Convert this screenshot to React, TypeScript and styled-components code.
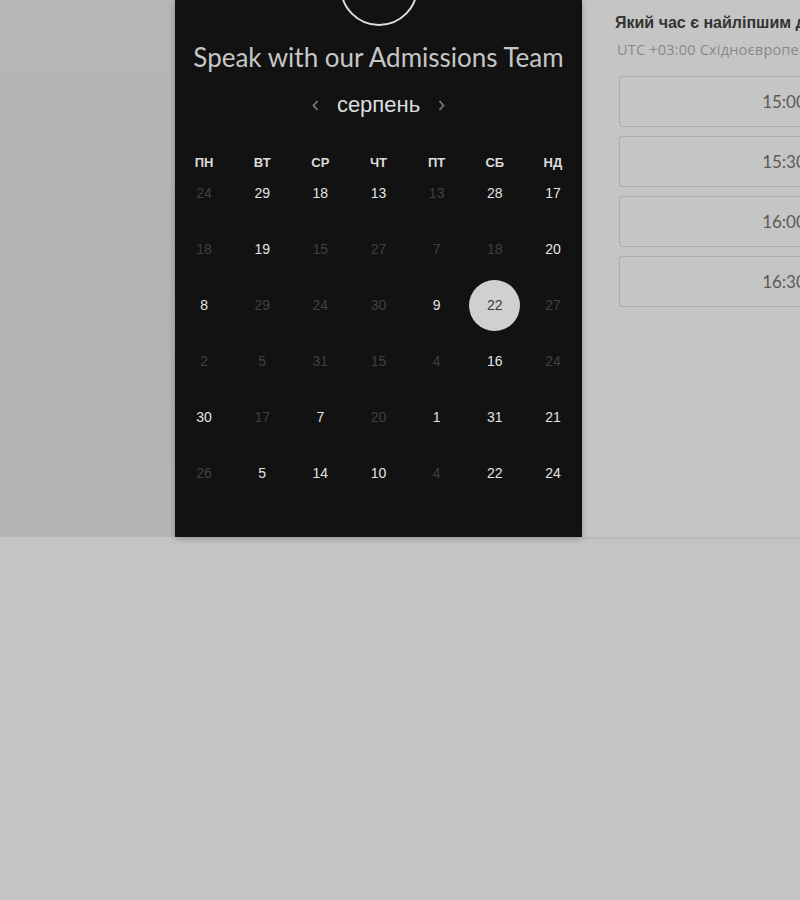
import React from "react";
import styled, { createGlobalStyle } from "styled-components";

const Global = createGlobalStyle`
  html, body { margin: 0; padding: 0; background: #c4c4c4; overflow: hidden; }
  body { font-family: "Liberation Sans", Arial, sans-serif; }
`;

const Page = styled.div`
  width: 800px;
  height: 900px;
  overflow: hidden;
  background: #c4c4c4;
`;

const TopRow = styled.div`
  display: flex;
  height: 537px;
  width: 1100px;
`;

const LeftShade = styled.div`
  width: 175px;
  flex: 0 0 175px;
  background: linear-gradient(180deg, #b6b6b6 0%, #b3b3b3 60%, #b5b5b5 100%);
`;

const CalendarPanel = styled.div`
  width: 407px;
  flex: 0 0 407px;
  background: #121212;
  box-shadow: 0 2px 6px rgba(0, 0, 0, 0.25);
  position: relative;
  z-index: 1;
  display: flex;
  flex-direction: column;
  align-items: center;
  overflow: hidden;
  padding-bottom: 42px;
  box-sizing: border-box;
`;

const Avatar = styled.div`
  width: 78px;
  height: 78px;
  flex: 0 0 78px;
  box-sizing: border-box;
  border-radius: 50%;
  border: 2.5px solid #dcdcdc;
  margin-top: -52px;
`;

const Title = styled.h1`
  margin: 15px 0 0;
  font-family: Lato, "Open Sans", sans-serif;
  font-weight: 400;
  font-size: 26px;
  line-height: 32px;
  color: #c6c6c6;
  white-space: nowrap;
`;

const MonthNav = styled.div`
  margin-top: 17px;
  height: 30px;
  display: flex;
  align-items: center;
  gap: 18px;
`;

const Month = styled.span`
  font-family: "Liberation Sans", Arial, sans-serif;
  font-size: 22px;
  line-height: 30px;
  color: #dedede;
`;

const Chevron = styled.svg`
  width: 7px;
  height: 11px;
  display: block;
`;

const WeekHeader = styled.div`
  margin-top: 35px;
  width: 100%;
  display: grid;
  grid-template-columns: repeat(7, 1fr);
`;

const WeekDay = styled.div`
  text-align: center;
  font-family: "Liberation Sans", Arial, sans-serif;
  font-weight: 700;
  font-size: 13px;
  line-height: 16px;
  color: #dcdcdc;
`;

const DaysGrid = styled.div`
  width: 100%;
  display: grid;
  grid-template-columns: repeat(7, 1fr);
  grid-auto-rows: 44px;
  row-gap: 12px;
`;

const DayCell = styled.div`
  display: flex;
  align-items: center;
  justify-content: center;
`;

const Day = styled.span<{ $muted?: boolean; $selected?: boolean }>`
  font-family: "Liberation Sans", Arial, sans-serif;
  font-size: 14px;
  color: ${(p) => (p.$selected ? "#3a3a3a" : p.$muted ? "#404040" : "#e4e4e4")};
  ${(p) =>
    p.$selected
      ? `
    width: 51px;
    height: 51px;
    flex: 0 0 51px;
    border-radius: 50%;
    background: #d0d0d0;
    display: flex;
    align-items: center;
    justify-content: center;
  `
      : ""}
`;

const RightPanel = styled.div`
  flex: 1 1 auto;
  background: #c5c5c5;
  border-bottom: 1px solid #b9b9b9;
  box-shadow: 0 1px 3px rgba(0, 0, 0, 0.06);
  padding: 13px 0 0 33px;
  box-sizing: border-box;
  height: 538px;
`;

const Question = styled.div`
  font-family: "Liberation Sans", Arial, sans-serif;
  font-weight: 700;
  font-size: 16px;
  line-height: 19px;
  color: #333333;
  white-space: nowrap;
`;

const Zone = styled.div`
  margin-top: 9px;
  padding-left: 2px;
  font-family: "Open Sans", Lato, sans-serif;
  font-size: 14.5px;
  letter-spacing: 0.2px;
  line-height: 18px;
  color: #888888;
  white-space: nowrap;
`;

const Slots = styled.div`
  margin-top: 17px;
  margin-left: 4px;
  display: flex;
  flex-direction: column;
  gap: 9px;
  width: 330px;
`;

const Slot = styled.button`
  height: 51px;
  box-sizing: border-box;
  border: 1px solid #acacac;
  border-radius: 3px;
  background: transparent;
  font-family: Lato, "Open Sans", sans-serif;
  font-size: 17px;
  color: #5a5a5a;
  text-align: center;
  padding: 0;
`;

type D = [number, boolean?, boolean?];
const rows: D[][] = [
  [[24, true], [29], [18], [13], [13, true], [28], [17]],
  [[18, true], [19], [15, true], [27, true], [7, true], [18, true], [20]],
  [[8], [29, true], [24, true], [30, true], [9], [22, false, true], [27, true]],
  [[2, true], [5, true], [31, true], [15, true], [4, true], [16], [24, true]],
  [[30], [17, true], [7], [20, true], [1], [31], [21]],
  [[26, true], [5], [14], [10], [4, true], [22], [24]],
];

const weekDays = ["ПН", "ВТ", "СР", "ЧТ", "ПТ", "СБ", "НД"];
const times = ["15:00", "15:30", "16:00", "16:30"];

export default function App() {
  return (
    <Page>
      <Global />
      <TopRow>
        <LeftShade />
        <CalendarPanel>
          <Avatar />
          <Title>Speak with our Admissions Team</Title>
          <MonthNav>
            <Chevron viewBox="0 0 7 11">
              <polyline points="5.5,1 1.5,5.5 5.5,10" fill="none" stroke="#7a7a7a" strokeWidth="1.8" />
            </Chevron>
            <Month>серпень</Month>
            <Chevron viewBox="0 0 7 11">
              <polyline points="1.5,1 5.5,5.5 1.5,10" fill="none" stroke="#7a7a7a" strokeWidth="1.8" />
            </Chevron>
          </MonthNav>
          <WeekHeader>
            {weekDays.map((w) => (
              <WeekDay key={w}>{w}</WeekDay>
            ))}
          </WeekHeader>
          <DaysGrid>
            {rows.flatMap((r, ri) =>
              r.map(([n, muted, sel], ci) => (
                <DayCell key={`${ri}-${ci}`}>
                  <Day $muted={muted} $selected={sel}>
                    {n}
                  </Day>
                </DayCell>
              ))
            )}
          </DaysGrid>
        </CalendarPanel>
        <RightPanel>
          <Question>Який час є найліпшим для вас?</Question>
          <Zone>UTC +03:00 Східноєвропейський час</Zone>
          <Slots>
            {times.map((t) => (
              <Slot key={t}>{t}</Slot>
            ))}
          </Slots>
        </RightPanel>
      </TopRow>
    </Page>
  );
}
